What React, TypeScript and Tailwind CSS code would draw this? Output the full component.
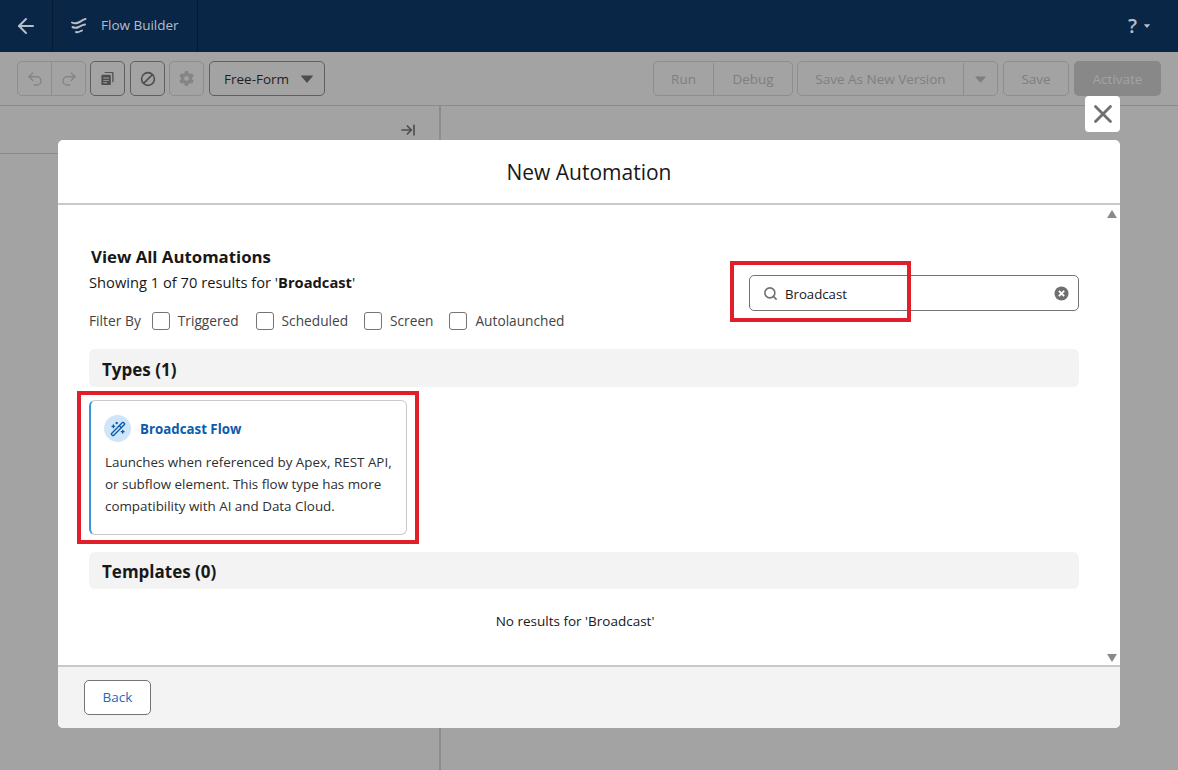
import { ArrowLeft, ArrowRightToLine, Redo2, Search, Undo2, WandSparkles, X } from "lucide-react";
import { FaGear } from "react-icons/fa6";

const font = { fontFamily: '"Open Sans", "Noto Sans", sans-serif' };

function Caret({ className }: { className: string }) {
  return (
    <svg viewBox="0 0 12 8" className={className} fill="currentColor">
      <path d="M0.6 0.5h10.8a.5 .5 0 0 1 .4 .8l-5.4 6.2a.5 .5 0 0 1 -.8 0l-5.4 -6.2a.5 .5 0 0 1 .4 -.8z" />
    </svg>
  );
}

function IconButton({ children, active }: { children: React.ReactNode; active?: boolean }) {
  return (
    <div
      className={
        "flex h-[35px] w-[35px] items-center justify-center rounded-[5px] border " +
        (active ? "border-[#5f5f5f] text-[#4d4d4d]" : "border-[#8e8e8e] text-[#858585]")
      }
    >
      {children}
    </div>
  );
}

function Toolbar() {
  return (
    <div className="flex h-[54px] items-center border-b border-[#8c8c8c] bg-[#a3a3a3] pl-[17px] pr-[17px] text-[13.5px]">
      <div className="flex h-[35px] w-[69px] rounded-[5px] border border-[#8e8e8e] text-[#858585]">
        <div className="flex w-[34px] items-center justify-center border-r border-[#8e8e8e]">
          <Undo2 size={18} />
        </div>
        <div className="flex flex-1 items-center justify-center">
          <Redo2 size={18} />
        </div>
      </div>
      <div className="ml-[4px]">
        <IconButton active>
          <svg viewBox="0 0 16 16" className="h-[15px] w-[15px]" fill="currentColor">
            <path d="M5 1h8.5a1 1 0 0 1 1 1v9a1 1 0 0 1 -1 1h-.5V3.5A1.5 1.5 0 0 0 11.5 2H5z" opacity=".9" />
            <path d="M2.5 4h8a1 1 0 0 1 1 1v9a1 1 0 0 1 -1 1h-8a1 1 0 0 1 -1 -1V5a1 1 0 0 1 1 -1zM3.5 7v1h6V7zM3.5 9.5v1h6v-1zM3.5 12v1h4v-1z" fillRule="evenodd" />
          </svg>
        </IconButton>
      </div>
      <div className="ml-[5px]">
        <IconButton active>
          <svg viewBox="0 0 16 16" className="h-[16px] w-[16px]" fill="none" stroke="currentColor" strokeWidth="1.6">
            <circle cx="8" cy="8" r="6.4" />
            <path d="M3.6 12.4L12.4 3.6" />
          </svg>
        </IconButton>
      </div>
      <div className="ml-[4px]">
        <IconButton>
          <FaGear size={15} />
        </IconButton>
      </div>
      <div className="ml-[5px] flex h-[35px] w-[116px] items-center justify-between rounded-[5px] border border-[#5f5f5f] pl-[14px] pr-[11px] text-[#1f1f1f]">
        <span className="pt-[1px]">Free-Form</span>
        <Caret className="h-[8px] w-[12px] text-[#4d4d4d]" />
      </div>

      <div className="ml-auto flex h-[35px] w-[140px] rounded-[5px] border border-[#8e8e8e] pt-[1px] text-[#7f7f7f]">
        <div className="flex w-[60px] items-center justify-center border-r border-[#8e8e8e]">Run</div>
        <div className="flex flex-1 items-center justify-center">Debug</div>
      </div>
      <div className="ml-[4px] flex h-[35px] w-[201px] rounded-[5px] border border-[#8e8e8e] pt-[1px] text-[#7f7f7f]">
        <div className="flex w-[166px] items-center justify-center border-r border-[#8e8e8e]">Save As New Version</div>
        <div className="flex flex-1 items-center justify-center">
          <Caret className="h-[7px] w-[11px] text-[#7f7f7f]" />
        </div>
      </div>
      <div className="ml-[5px] flex h-[35px] w-[66px] items-center justify-center rounded-[5px] border border-[#8e8e8e] pt-[1px] text-[#7f7f7f]">
        Save
      </div>
      <div className="ml-[5px] flex h-[35px] w-[87px] items-center justify-center rounded-[5px] bg-[#888888] pt-[1px] text-[#a3a3a3]">
        Activate
      </div>
    </div>
  );
}

function Filter({ label, className = "" }: { label: string; className?: string }) {
  return (
    <div className={"flex items-center gap-[8px] " + className}>
      <div className="h-[18px] w-[18px] rounded-[3px] border border-[#747474] bg-white" />
      <span className="text-[13.7px] text-[#444444]">{label}</span>
    </div>
  );
}

function Modal() {
  return (
    <div className="absolute left-[58px] top-[140px] flex h-[588px] w-[1062px] flex-col overflow-hidden rounded-[5px] bg-white text-[#181818]">
      <div className="flex h-[65px] shrink-0 items-center justify-center border-b-2 border-[#c9c9c9] pt-[3px] text-[21px]">
        New Automation
      </div>
      <div className="relative flex-1 pl-[31px] pr-[41px]">
        <svg viewBox="0 0 10 8" className="absolute right-[3px] top-[5px] h-[8px] w-[10px] text-[#8a8a8a]" fill="currentColor">
          <path d="M5 0l5 8H0z" />
        </svg>
        <svg viewBox="0 0 10 8" className="absolute bottom-[3px] right-[3px] h-[8px] w-[10px] text-[#8a8a8a]" fill="currentColor">
          <path d="M0 0h10L5 8z" />
        </svg>
        <div className="flex items-start justify-between pt-[40px]">
          <div>
            <div className="pl-[2px] text-[16.8px] font-bold leading-[24px]">View All Automations</div>
            <div className="mt-[3px] text-[14.7px] leading-[20px]">
              Showing 1 of 70 results for '<b>Broadcast</b>'
            </div>
            <div className="mt-[18px] flex h-[22px] items-center">
              <span className="mr-[11px] text-[13.8px] text-[#444444]">Filter By</span>
              <Filter label="Triggered" />
              <Filter label="Scheduled" className="ml-[17px]" />
              <Filter label="Screen" className="ml-[16px]" />
              <Filter label="Autolaunched" className="ml-[16px]" />
            </div>
          </div>
          <div className="mt-[30px] flex h-[36px] w-[330px] items-center rounded-[5px] border border-[#747474] pl-[13px] pr-[9px]">
            <Search size={15} strokeWidth={2.5} className="text-[#6f6f6f]" />
            <span className="ml-[7px] flex-1 pt-[4px] text-[13.2px]">Broadcast</span>
            <svg viewBox="0 0 16 16" className="h-[15px] w-[15px] text-[#6f6f6f]">
              <circle cx="8" cy="8" r="7.5" fill="currentColor" />
              <path d="M5.2 5.2l5.6 5.6M10.8 5.2l-5.6 5.6" stroke="#fff" strokeWidth="2" />
            </svg>
          </div>
        </div>

        <div className="mt-[17px] flex h-[38px] items-center rounded-[6px] bg-[#f3f3f3] pl-[13px] pt-[3px] text-[17px] font-bold">
          Types (1)
        </div>

        <div className="mt-[13px] h-[135px] w-[318px] rounded-[6px] border border-l-[2px] border-[#c9c9c9] border-l-[#3b97d8] pl-[13px] pr-[10px] pt-[14px]">
          <div className="flex items-center">
            <div className="flex h-[27px] w-[27px] items-center justify-center rounded-full bg-[#cfe6fa] text-[#0b5cab]">
              <WandSparkles size={16} />
            </div>
            <span className="ml-[9px] pt-[3px] text-[13.3px] font-bold text-[#0b5cab]">Broadcast Flow</span>
          </div>
          <p className="ml-[1px] mt-[9px] text-[13.4px] leading-[22px] text-[#2e2e2e]">
            Launches when referenced by Apex, REST API, or subflow element. This flow type has more compatibility with AI and Data Cloud.
          </p>
        </div>

        <div className="mt-[17px] flex h-[37px] items-center rounded-[6px] bg-[#f3f3f3] pl-[13px] pt-[2px] text-[17px] font-bold">
          Templates (0)
        </div>
        <div className="mt-[22px] pr-[18px] text-center text-[13.5px] leading-[20px]">No results for 'Broadcast'</div>
      </div>
      <div className="flex h-[63px] shrink-0 items-center border-t-2 border-[#c9c9c9] bg-[#f3f3f3] pl-[26px]">
        <div className="flex h-[35px] w-[67px] items-center justify-center rounded-[5px] border border-[#747474] bg-white text-[13.5px] text-[#2a67c0]">
          Back
        </div>
      </div>
    </div>
  );
}

export default function App() {
  return (
    <div className="relative h-[770px] w-[1178px] overflow-hidden bg-[#a3a3a3]" style={font}>
      <div className="flex h-[52px] items-center bg-[#0a2647] text-[#b5bec9]">
        <div className="flex h-full w-[53px] items-center justify-center border-r border-[#061a33]">
          <ArrowLeft size={24} />
        </div>
        <div className="flex h-full w-[145px] items-center border-r border-[#061a33] pl-[17px] pb-[1px]">
          <svg viewBox="0 0 18 18" className="h-[18px] w-[18px]" fill="none" stroke="currentColor" strokeWidth="2" strokeLinecap="round">
            <path d="M2 5.5c2.5 1.5 4 1.2 6.5 0S13 2.5 15.5 2" />
            <path d="M2.5 10c2.5 1.2 4 1 6 0s4-2.2 6.5-2.5" />
            <path d="M6 15c1.5.5 3 .2 6-1.5" />
          </svg>
          <span className="ml-[13px] text-[13.5px]">Flow Builder</span>
        </div>
        <div className="ml-auto flex items-center gap-[7px] pr-[28px]">
          <span className="text-[20px] font-semibold leading-none">?</span>
          <Caret className="h-[4px] w-[6px]" />
        </div>
      </div>
      <Toolbar />
      <div className="flex h-[664px]">
        <div className="w-[441px] border-r-2 border-[#8c8c8c]">
          <div className="flex h-[48px] items-center justify-end border-b border-[#8c8c8c] pr-[23px] text-[#4d4d4d]">
            <ArrowRightToLine size={16} strokeWidth={2.5} />
          </div>
        </div>
      </div>

      <div className="absolute left-[1085px] top-[96px] flex h-[36px] w-[35px] items-center justify-center rounded-[4px] bg-white text-[#6f6f6f]">
        <X size={30} strokeWidth={2.2} />
      </div>
      <Modal />

      <div className="absolute left-[730px] top-[261px] h-[61px] w-[181px] border-[4px] border-[#e01f2b]" />
      <div className="absolute left-[77px] top-[391px] h-[153px] w-[342px] border-[4px] border-[#e01f2b]" />
    </div>
  );
}
